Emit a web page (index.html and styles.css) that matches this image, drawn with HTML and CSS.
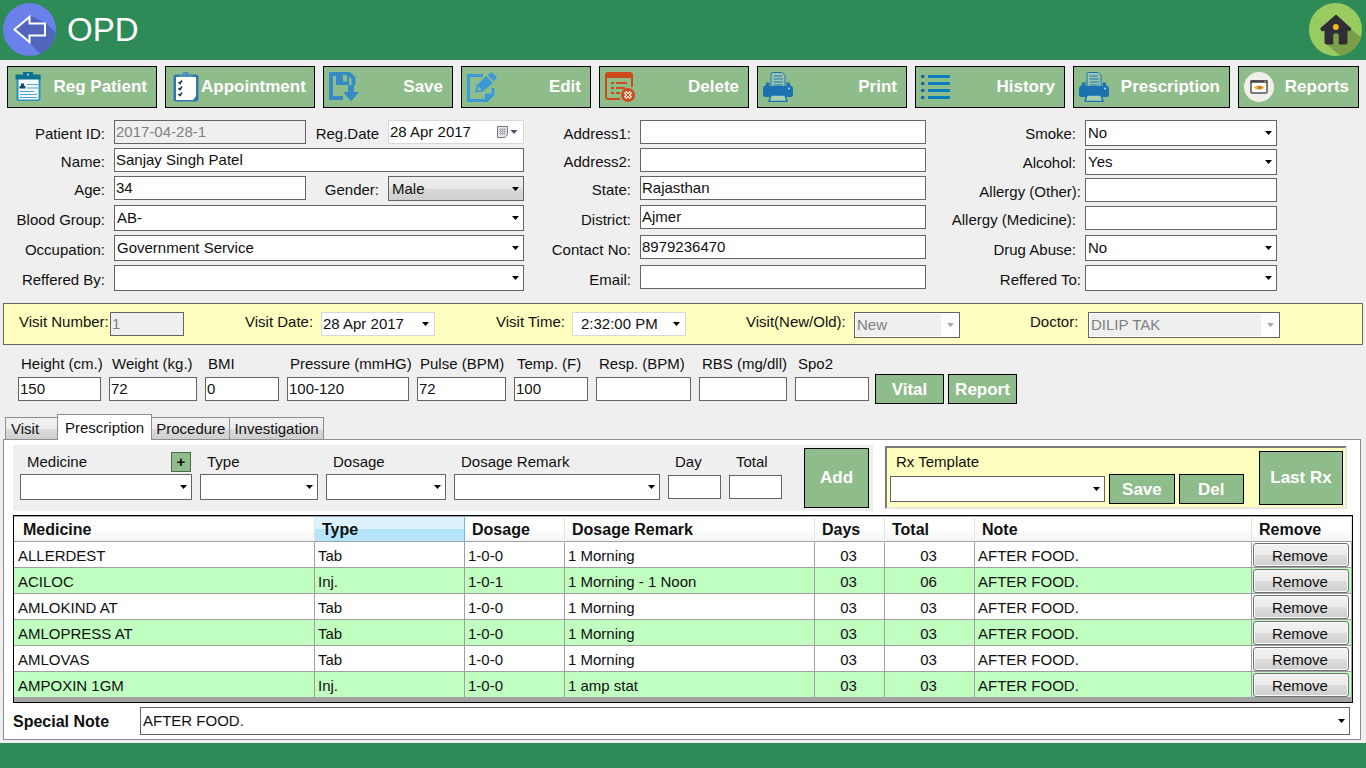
FILE: index.html
```html
<!DOCTYPE html>
<html lang="en">
<head>
<meta charset="utf-8">
<meta name="viewport" content="width=device-width, initial-scale=1">
<title>OPD</title>
<link rel="stylesheet" href="styles.css">
</head>
<body>
<header class="topbar">
  <button class="round-btn" type="button" aria-label="Back">
    <svg viewBox="0 0 53 53">
      <circle cx="26.500" cy="26.500" r="26.500" fill="#6a80ea"/>
      <path d="M43 20L52.500 29.500A26.500 26.500 0 0 1 37 50.800L27 40.500V12.500Z" fill="#5265bd"/>
      <path d="M11.500 26.500L26.500 14V20.500H42V32.500H26.500V39Z" fill="#5265bd" stroke="#fff" stroke-width="2"/>
    </svg>
  </button>
  <h1 class="title">OPD</h1>
  <button class="round-btn round-btn-end" type="button" aria-label="Home">
    <svg viewBox="0 0 53 53">
      <circle cx="26.500" cy="26.500" r="26.500" fill="#9acb60"/>
      <path d="M42 26L52 34.500A26.500 26.500 0 0 1 31 52.600L17 41Z" fill="#7b9f48"/>
      <path d="M27 12L42 25.500L40.500 28L38 27V39.500Q38 41 36.500 41H30V32Q30 30 27 30T24 32V41H17.500Q16 41 16 39.500V27L13 28L11.500 25.500Z" fill="#302e35" stroke="#302e35"/>
      <path d="M24.500 41V32Q24.500 30.500 27 30.500T29.500 32V41Z" fill="#7b9f48"/>
      <circle cx="26.800" cy="24" r="3" fill="#f2b824"/>
    </svg>
  </button>
</header>

<nav class="toolbar" aria-label="Actions">
  <button class="btn tool" type="button">
    <svg viewBox="0 0 30 30"><rect x="3.500" y="3" width="24" height="26" rx="2" fill="#2a92ba"/><rect x="5.500" y="7" width="20" height="20.500" fill="#f2f8fb"/><path d="M2.500 2.500H10V0H20V2.500H27.500V7.500H2.500Z" fill="#0b7290"/><circle cx="15" cy="2.500" r="1" fill="#bfe0ea"/><path d="M6.500 16.500V14.500L8 13.500V11.500H11V13.500L12.500 14.500V16.500Z" fill="#124a66"/><path d="M14 12.500H25M14 16H25M6.500 19.500H21M6.500 22.500H24M6.500 25.500H24" stroke="#4aa5c6"/></svg>
    <span>Reg Patient</span></button>
  <button class="btn tool" type="button">
    <svg viewBox="0 0 30 30"><rect x="2.500" y="2.500" width="25" height="27" rx="2.500" fill="#3177ac"/><path d="M5 5H25V24L22 28H5Z" fill="#fff"/><path d="M8 5V3H12V0H17.500V3H22V5Z" fill="#4e8fc2"/><path d="M7.500 10L9 11.500L11 8.500M7.500 16L9 17.500L11 14.500M7.500 22L9 23.500L11 20.500" fill="none" stroke="#1d2f4a" stroke-width="1.500"/></svg>
    <span>Appointment</span></button>
  <button class="btn tool" type="button">
    <svg viewBox="0 0 30 30"><path d="M14 26H2V2H20L24.500 6V13" fill="none" stroke="#368bc4" stroke-width="4"/><path d="M7 2H20V13H7Z" fill="#368bc4"/><rect x="14" y="3" width="4" height="6.500" fill="#8fbc8b"/><path d="M19 13H25V20H30L22 29.500L14 20H19Z" fill="#368bc4"/></svg>
    <span>Save</span></button>
  <button class="btn tool" type="button">
    <svg viewBox="0 0 30 30"><path d="M16 3.500H1.500V28.500H20L26 22.500V16" fill="none" stroke="#3d98d6" stroke-width="3"/><path d="M18 30V21.500H27Z" fill="#3d98d6"/><path d="M8 20.500L9.500 13.500L19 4L26 11L16 19.500Z" fill="#3d98d6"/><path d="M20.500 3L24.500 0L30 5L27 9.500Z" fill="#3d98d6"/><path d="M10 18.500L11.500 14.500L14.500 18Z" fill="#8fbc8b"/></svg>
    <span>Edit</span></button>
  <button class="btn tool" type="button">
    <svg viewBox="0 0 30 30"><path d="M15 27H3Q1 27 1 25V3Q1 1 3 1H25Q27 1 27 3V15" fill="none" stroke="#cf4a1b" stroke-width="2"/><path d="M1 1H27V6H1Z" fill="#cf4a1b"/><path d="M6 11H9M11 11H22M6 16H9M11 16H20M6 21H9M11 21H15" stroke="#cf4a1b" stroke-width="2"/><circle cx="23" cy="23" r="7" fill="#cf4a1b"/><path d="M20 20L26 26M26 20L20 26" stroke="#f6e6dc" stroke-width="3.500"/><path d="M20.500 20.500L25.500 25.500M25.500 20.500L20.500 25.500" stroke="#cf4a1b"/></svg>
    <span>Delete</span></button>
  <button class="btn tool" type="button">
    <svg viewBox="0 0 30 30"><path d="M0 17Q0 14 3 13V10.500H27V13Q30 14 30 17V23Q30 25 28 25H2Q0 25 0 23Z" fill="#1b72b0"/><path d="M6.500 10V14H23.500V10" fill="#8fbc8b"/><path d="M8 14.500V2Q8 .5 9.500 .5H19L22 3.500V14.500Z" fill="#9cc7ac" stroke="#1b72b0"/><path d="M10.500 4H19M10.500 7H20M10.500 10H20M10.500 13H20" stroke="#1b72b0"/><circle cx="26" cy="16.500" r="1" fill="#b8d8ea"/><path d="M8 23H22L24 29.500H6Z" fill="#a9cfb4" stroke="#1b72b0" stroke-width="1.500"/></svg>
    <span>Print</span></button>
  <button class="btn tool" type="button">
    <svg viewBox="0 0 30 30"><path d="M7 4.500H29M7 11.500H29M7 18.500H29M7 25.500H29" stroke="#0a7cbc" stroke-width="3"/><path d="M0 4.500H3.500M0 11.500H3.500M0 18.500H3.500M0 25.500H3.500" stroke="#1b6eaa" stroke-width="3"/></svg>
    <span>History</span></button>
  <button class="btn tool" type="button">
    <svg viewBox="0 0 30 30"><path d="M0 17Q0 14 3 13V10.500H27V13Q30 14 30 17V23Q30 25 28 25H2Q0 25 0 23Z" fill="#1b72b0"/><path d="M6.500 10V14H23.500V10" fill="#8fbc8b"/><path d="M8 14.500V2Q8 .5 9.500 .5H19L22 3.500V14.500Z" fill="#9cc7ac" stroke="#1b72b0"/><path d="M10.500 4H19M10.500 7H20M10.500 10H20M10.500 13H20" stroke="#1b72b0"/><circle cx="26" cy="16.500" r="1" fill="#b8d8ea"/><path d="M8 23H22L24 29.500H6Z" fill="#a9cfb4" stroke="#1b72b0" stroke-width="1.500"/></svg>
    <span>Prescription</span></button>
  <button class="btn tool" type="button">
    <svg viewBox="0 0 30 30"><circle cx="15" cy="15" r="15" fill="#f1efec"/><rect x="7" y="9" width="16" height="12" rx="1" fill="#fff" stroke="#545454" stroke-width="1.500"/><path d="M6.500 9.500H23.500" stroke="#444" stroke-width="2.500"/><path d="M20 9.500H22" stroke="#7dc04e"/><path d="M10 15.500Q15 11.500 20.500 15.500Q15 20 10 15.500Z" fill="#f0a136"/><circle cx="16" cy="15.500" r="1.500" fill="#c76a20"/></svg>
    <span>Reports</span></button>
</nav>

<main>
<form class="patient">
  <div class="form-col col-a">
    <label for="pid">Patient ID:</label><input id="pid" class="box" value="2017-04-28-1" disabled>
    <label for="regdate">Reg.Date</label><input id="regdate" class="box date date-cal" value="28 Apr 2017">
    <label for="pname">Name:</label><input id="pname" class="box wide" value="Sanjay Singh Patel">
    <label for="age">Age:</label><input id="age" class="box" value="34">
    <label for="gender">Gender:</label><select id="gender" class="box combo combo-grey"><option>Male</option></select>
    <label for="blood">Blood Group:</label><select id="blood" class="box combo wide"><option>AB-</option></select>
    <label for="occ">Occupation:</label><select id="occ" class="box combo wide"><option>Government Service</option></select>
    <label for="refby">Reffered By:</label><select id="refby" class="box combo wide"><option></option></select>
  </div>
  <div class="form-col col-b">
    <label for="ad1">Address1:</label><input id="ad1" class="box">
    <label for="ad2">Address2:</label><input id="ad2" class="box">
    <label for="state">State:</label><input id="state" class="box" value="Rajasthan">
    <label for="district">District:</label><input id="district" class="box" value="Ajmer">
    <label for="contact">Contact No:</label><input id="contact" class="box" value="8979236470">
    <label for="email">Email:</label><input id="email" class="box">
  </div>
  <div class="form-col col-c">
    <label for="smoke">Smoke:</label><select id="smoke" class="box combo"><option>No</option></select>
    <label for="alcohol">Alcohol:</label><select id="alcohol" class="box combo"><option>Yes</option></select>
    <label class="near" for="allo">Allergy (Other):</label><input id="allo" class="box">
    <label for="allm">Allergy (Medicine):</label><input id="allm" class="box">
    <label for="drug">Drug Abuse:</label><select id="drug" class="box combo"><option>No</option></select>
    <label class="near" for="refto">Reffered To:</label><select id="refto" class="box combo"><option></option></select>
  </div>
</form>

<section class="visit">
  <div class="vfield v-number"><label for="vno">Visit Number:</label><input id="vno" class="box" value="1" disabled></div>
  <div class="vfield v-date"><label for="vdate">Visit Date:</label><input id="vdate" class="box date date-drop" value="28 Apr 2017"></div>
  <div class="vfield v-date"><label for="vtime">Visit Time:</label><input id="vtime" class="box date date-drop date-time" value="2:32:00 PM"></div>
  <div class="vfield v-kind"><label for="vkind">Visit(New/Old):</label><select id="vkind" class="box combo" disabled><option>New</option></select></div>
  <div class="vfield v-doctor"><label for="doctor">Doctor:</label><select id="doctor" class="box combo" disabled><option>DILIP TAK</option></select></div>
</section>

<section class="vitals">
  <div class="vital"><label for="h">Height (cm.)</label><input id="h" class="box" value="150"></div>
  <div class="vital"><label for="w">Weight (kg.)</label><input id="w" class="box" value="72"></div>
  <div class="vital"><label for="bmi">BMI</label><input id="bmi" class="box" value="0"></div>
  <div class="vital"><label for="bp">Pressure (mmHG)</label><input id="bp" class="box" value="100-120"></div>
  <div class="vital"><label for="pulse">Pulse (BPM)</label><input id="pulse" class="box" value="72"></div>
  <div class="vital"><label for="temp">Temp. (F)</label><input id="temp" class="box" value="100"></div>
  <div class="vital"><label for="resp">Resp. (BPM)</label><input id="resp" class="box"></div>
  <div class="vital"><label for="rbs">RBS (mg/dll)</label><input id="rbs" class="box"></div>
  <div class="vital"><label for="spo">Spo2</label><input id="spo" class="box"></div>
  <div class="vital-actions"><button class="btn btn-small" type="button">Vital</button><button class="btn btn-small" type="button">Report</button></div>
</section>

<div class="tabs" role="tablist">
  <button class="tab tab-visit" role="tab" type="button">Visit</button>
  <button class="tab tab-on" role="tab" type="button" aria-selected="true">Prescription</button>
  <button class="tab" role="tab" type="button">Procedure</button>
  <button class="tab" role="tab" type="button">Investigation</button>
</div>

<section class="panel" role="tabpanel">
  <div class="entry-row">
    <div class="entry">
      <div class="efield"><div class="ehead"><label for="med">Medicine</label><button class="plus" type="button" aria-label="Add medicine">+</button></div><select id="med" class="box combo"><option></option></select></div>
      <div class="efield"><div class="ehead"><label for="type">Type</label></div><select id="type" class="box combo"><option></option></select></div>
      <div class="efield"><div class="ehead"><label for="dose">Dosage</label></div><select id="dose" class="box combo"><option></option></select></div>
      <div class="efield"><div class="ehead"><label for="remark">Dosage Remark</label></div><select id="remark" class="box combo"><option></option></select></div>
      <div class="efield"><div class="ehead"><label for="day">Day</label></div><input id="day" class="box"></div>
      <div class="efield"><div class="ehead"><label for="total">Total</label></div><input id="total" class="box"></div>
      <button class="btn add" type="button">Add</button>
    </div>
    <div class="template">
      <div class="template-main">
        <label for="rx">Rx Template</label>
        <div class="template-line"><select id="rx" class="box combo"><option></option></select><button class="btn btn-small" type="button">Save</button><button class="btn btn-small" type="button">Del</button></div>
      </div>
      <button class="btn last" type="button">Last Rx</button>
    </div>
  </div>

  <div class="grid">
    <table class="rx">
      <colgroup><col class="c-med"><col class="c-type"><col class="c-dose"><col class="c-remark"><col class="c-days"><col class="c-total"><col class="c-note"><col class="c-remove"></colgroup>
      <thead><tr><th>Medicine</th><th class="hot">Type</th><th>Dosage</th><th>Dosage Remark</th><th>Days</th><th>Total</th><th>Note</th><th>Remove</th></tr></thead>
      <tbody>
        <tr><td>ALLERDEST</td><td>Tab</td><td>1-0-0</td><td>1 Morning</td><td class="num">03</td><td class="num">03</td><td>AFTER FOOD.</td><td class="act"><button class="remove" type="button">Remove</button></td></tr>
        <tr><td>ACILOC</td><td>Inj.</td><td>1-0-1</td><td>1 Morning - 1 Noon</td><td class="num">03</td><td class="num">06</td><td>AFTER FOOD.</td><td class="act"><button class="remove" type="button">Remove</button></td></tr>
        <tr><td>AMLOKIND AT</td><td>Tab</td><td>1-0-0</td><td>1 Morning</td><td class="num">03</td><td class="num">03</td><td>AFTER FOOD.</td><td class="act"><button class="remove" type="button">Remove</button></td></tr>
        <tr><td>AMLOPRESS AT</td><td>Tab</td><td>1-0-0</td><td>1 Morning</td><td class="num">03</td><td class="num">03</td><td>AFTER FOOD.</td><td class="act"><button class="remove" type="button">Remove</button></td></tr>
        <tr><td>AMLOVAS</td><td>Tab</td><td>1-0-0</td><td>1 Morning</td><td class="num">03</td><td class="num">03</td><td>AFTER FOOD.</td><td class="act"><button class="remove" type="button">Remove</button></td></tr>
        <tr><td>AMPOXIN 1GM</td><td>Inj.</td><td>1-0-0</td><td>1 amp stat</td><td class="num">03</td><td class="num">03</td><td>AFTER FOOD.</td><td class="act"><button class="remove" type="button">Remove</button></td></tr>
      </tbody>
    </table>
  </div>

  <div class="note"><label for="note">Special Note</label><select id="note" class="box combo"><option>AFTER FOOD.</option></select></div>
</section>
</main>
<footer class="bottombar"></footer>
</body>
</html>
```
FILE: styles.css
```css
* { box-sizing: border-box; }

body {
  margin: 0;
  min-height: 100vh;
  display: flex;
  flex-direction: column;
  background: #efefef;
  color: #101010;
  font: 15px/18px "Liberation Sans", Arial, sans-serif;
}

button, input, select { font: inherit; color: inherit; margin: 0; }
label { white-space: nowrap; }

/* Header and footer bars */
.topbar {
  display: flex;
  align-items: center;
  height: 60px;
  padding: 0 4px 1px 3px;
  background: #2e8b57;
}
.round-btn { width: 53px; height: 53px; padding: 0; border: 0; background: none; }
.round-btn svg { display: block; width: 53px; height: 53px; }
.round-btn-end { margin-left: auto; }
.title { margin: 0 0 0 11px; color: #fff; font-size: 33px; line-height: 40px; font-weight: 400; }
.bottombar { flex: 1; min-height: 25px; margin-top: 3px; background: #2e8b57; }

/* Green buttons */
.btn {
  border: 1px solid #000;
  background: #8fbc8b;
  color: #fff;
  font-size: 17px;
  font-weight: 700;
  white-space: nowrap;
}
.btn-small { width: 69px; height: 30px; padding: 2px 0 0; }

.toolbar {
  display: grid;
  grid-template-columns: 150fr 150fr 130fr 130fr 150fr 150fr 150fr 157fr 121fr;
  gap: 8px;
  padding: 6px 7px 0;
}
.tool {
  display: flex;
  align-items: center;
  justify-content: space-between;
  min-width: 0;
  height: 42px;
  padding: 0 9px 0 5px;
}
.tool svg { flex: none; width: 30px; height: 30px; }

/* Boxes shared by every field */
.box {
  width: 100%;
  min-width: 0;
  height: 24px;
  padding: 0 1px 1px;
  border: 1px solid #646464;
  border-radius: 0;
  background-color: #fff;
}
.box:disabled { background-color: #efefef; color: #808080; opacity: 1; }
.combo {
  height: 26px;
  padding: 0 18px 0 2px;
  appearance: none;
  background-image: url("data:image/svg+xml,%3Csvg xmlns='http://www.w3.org/2000/svg' width='7' height='4'%3E%3Cpath d='M0 0H7L3.5 4Z'/%3E%3C/svg%3E");
  background-repeat: no-repeat;
  background-position: right 4px center;
}
.combo:disabled {
  border-color: #646464;
  background-image:
    url("data:image/svg+xml,%3Csvg xmlns='http://www.w3.org/2000/svg' width='7' height='4'%3E%3Cpath fill='%23a8a8a8' d='M0 0H7L3.5 4Z'/%3E%3C/svg%3E"),
    linear-gradient(#fff, #fff);
  background-size: 7px 4px, 18px 100%;
  background-position: right 5px center, right top;
  box-shadow: inset 0 0 0 1px #fff;
}
.combo-grey {
  height: 25px;
  padding-left: 3px;
  background-image:
    url("data:image/svg+xml,%3Csvg xmlns='http://www.w3.org/2000/svg' width='7' height='4'%3E%3Cpath d='M0 0H7L3.5 4Z'/%3E%3C/svg%3E"),
    linear-gradient(#f0f0f0, #e6e6e6 50%, #d8d8d8 50%, #cfcfcf);
  background-size: 7px 4px, 100% 100%;
  background-position: right 4px center, left top;
}
.date { border-color: #d8d8dc; background-repeat: no-repeat; }
.date-drop {
  background-image: url("data:image/svg+xml,%3Csvg xmlns='http://www.w3.org/2000/svg' width='7' height='4'%3E%3Cpath d='M0 0H7L3.5 4Z'/%3E%3C/svg%3E");
  background-position: right 5px center;
}
.date-time { padding-left: 8px; }
.date-cal {
  background-image: url("data:image/svg+xml,%3Csvg xmlns='http://www.w3.org/2000/svg' width='21' height='12'%3E%3Cpath d='M.5 .5H10.5V8.500L8 11.500H.5Z' fill='%23e6e6ea' stroke='%2377777f'/%3E%3Cpath d='M2 3.500H9M2 5.500H9M2 7.500H9M3.500 2V9M5.500 2V9M7.500 2V9' stroke='%23b0b0b8'/%3E%3Cpath d='M13.500 4H20.500L17 8Z' fill='%23465468'/%3E%3C/svg%3E");
  background-position: right 5px center;
}

/* Patient details */
.patient {
  display: grid;
  grid-template-columns: 524fr 402fr 351fr 89fr;
  padding-top: 12px;
}
.form-col { display: grid; row-gap: 4px; align-items: start; align-content: start; }
.form-col label { align-self: center; padding: 3px 9px 0 0; text-align: right; }
.col-a { grid-template-columns: 114px 192fr 82px 136fr; grid-template-rows: 24px 24px 25px 26px 26px 26px; }
.col-b { grid-template-columns: 116px 1fr; grid-template-rows: 24px 24px 25px 26px 26px 26px; }
.col-c { grid-template-columns: 159px 1fr; grid-template-rows: 25px 25px 24px 25px 26px 26px; }
.form-col .near { padding-right: 4px; }
.wide { grid-column: 2 / -1; }

/* Visit strip */
.visit {
  display: grid;
  grid-template-columns: 226fr 251fr 250fr 284fr 332fr;
  margin: 12px 3px 0;
  padding: 8px 0 6px 15px;
  border: 1px solid #646464;
  background: #ffffc0;
}
.vfield { display: grid; align-items: start; }
.vfield label { line-height: 20px; }
.v-number { grid-template-columns: 91px 74px; }
.v-date { grid-template-columns: 76px 114px; }
.v-kind { grid-template-columns: 108px 106px; }
.v-doctor { grid-template-columns: 58px 192px; }

/* Vitals */
.vitals {
  display: grid;
  grid-template-columns: 83fr 88fr 74fr 122fr 89fr 74fr 95fr 88fr 74fr 489fr;
  column-gap: 8px;
  align-items: end;
  margin-top: 10px;
  padding-left: 18px;
}
.vital { display: flex; flex-direction: column; gap: 4px; padding-bottom: 3px; min-width: 0; }
.vital label { padding-left: 3px; }
.vital-actions { display: flex; gap: 4px; margin-left: -2px; }

/* Tabs */
.tabs { display: flex; align-items: flex-end; height: 26px; margin-top: 10px; padding-left: 5px; }
.tab {
  height: 23px;
  margin-left: -1px;
  padding: 0 4px;
  border: 1px solid #8c8e94;
  background: linear-gradient(#f2f2f2, #ebebeb 50%, #dddddd 50%, #cfcfcf);
}
.tab-visit { width: 53px; margin-left: 0; padding: 0 5px; text-align: left; }
.tab-on { z-index: 1; height: 26px; padding: 0 7px; border-bottom: 0; background: #fff; }

.panel {
  margin: -1px 5px 0 3px;
  padding: 5px 7px 4px 9px;
  border: 1px solid #8c8e94;
  background: #fff;
}

/* New prescription line */
.entry-row { display: grid; grid-template-columns: 860fr 462fr; column-gap: 12px; padding-right: 6px; }
.entry {
  display: grid;
  grid-template-columns: 172fr 118fr 120fr 206fr 53fr 53fr 79fr;
  column-gap: 8px;
  align-items: start;
  padding: 3px 4px 3px 7px;
  background: #efefef;
}
.efield { display: grid; grid-template-rows: 26px 26px; align-items: center; }
.ehead { display: flex; align-items: center; justify-content: space-between; padding: 2px 1px 0 7px; }
.plus {
  width: 20px;
  height: 20px;
  padding: 0;
  border: 1px solid #4f6b4d;
  background: #8fbc8b;
  line-height: 16px;
  font-weight: 700;
}
.add { height: 60px; margin-left: 14px; padding: 0; }
.template {
  display: flex;
  align-items: flex-start;
  justify-content: space-between;
  margin-top: 1px;
  height: 63px;
  padding: 3px 2px 0 3px;
  border: 2px solid;
  border-color: #7a7a7a #e8e8e0 #e8e8e0 #7a7a7a;
  background: #ffffc0;
}
.template-main { flex: 1; padding-top: 2px; }
.template-main label { display: block; padding-left: 6px; }
.template-line { display: grid; grid-template-columns: 214fr 65fr 65fr; gap: 4px; align-items: center; margin: 3px 15px 0 0; }
.template-line .btn { width: auto; }
.last { width: 84px; height: 54px; padding: 0; }

/* Prescription table */
.grid { margin-top: 4px; padding-bottom: 4px; border: 1px solid #000; background: #a3a3a3; }
.rx { width: 100%; table-layout: fixed; border-collapse: separate; border-spacing: 0; background: #fff; }
.c-med { width: 301px; }
.c-type { width: 150px; }
.c-dose { width: 100px; }
.c-remark { width: 250px; }
.c-days { width: 70px; }
.c-total { width: 90px; }
.c-note { width: 277px; }
.c-remove { width: 100px; }
.rx th {
  height: 26px;
  padding: 2px 7px 0;
  border-top: 1px solid #a0a0a0;
  border-right: 1px solid #e2e4e8;
  border-bottom: 1px solid #a0a0a0;
  background: linear-gradient(#fff 50%, #f2f3f5);
  text-align: left;
  font-size: 16px;
}
.rx th:first-child { padding-left: 9px; }
.rx .hot { border-right-color: #6cb8e0; background: linear-gradient(#dcf3fd 50%, #b4e5fb 50%); }
.rx td {
  height: 26px;
  padding: 3px 3px 0;
  border-right: 1px solid #a0a0a0;
  border-bottom: 1px solid #a0a0a0;
  white-space: nowrap;
}
.rx td:first-child { padding-left: 4px; }
.rx tr:nth-child(even) td { background: #c0ffc0; }
.rx .num { padding-right: 5px; text-align: center; }
.rx .act { padding: 0 2px 0 1px; }
.remove {
  display: block;
  width: 100%;
  height: 24px;
  padding: 2px 2px 0 0;
  border: 1px solid #707070;
  border-radius: 3px;
  background: linear-gradient(#f2f2f2, #ebebeb 50%, #dddddd 50%, #cfcfcf);
  box-shadow: inset 0 0 0 1px #fafafa;
}

.note { display: grid; grid-template-columns: 127px 1fr; align-items: center; margin: 4px 3px 0 0; }
.note label { padding-top: 2px; font-size: 16px; font-weight: 700; }
.note .combo { height: 28px; }
```
